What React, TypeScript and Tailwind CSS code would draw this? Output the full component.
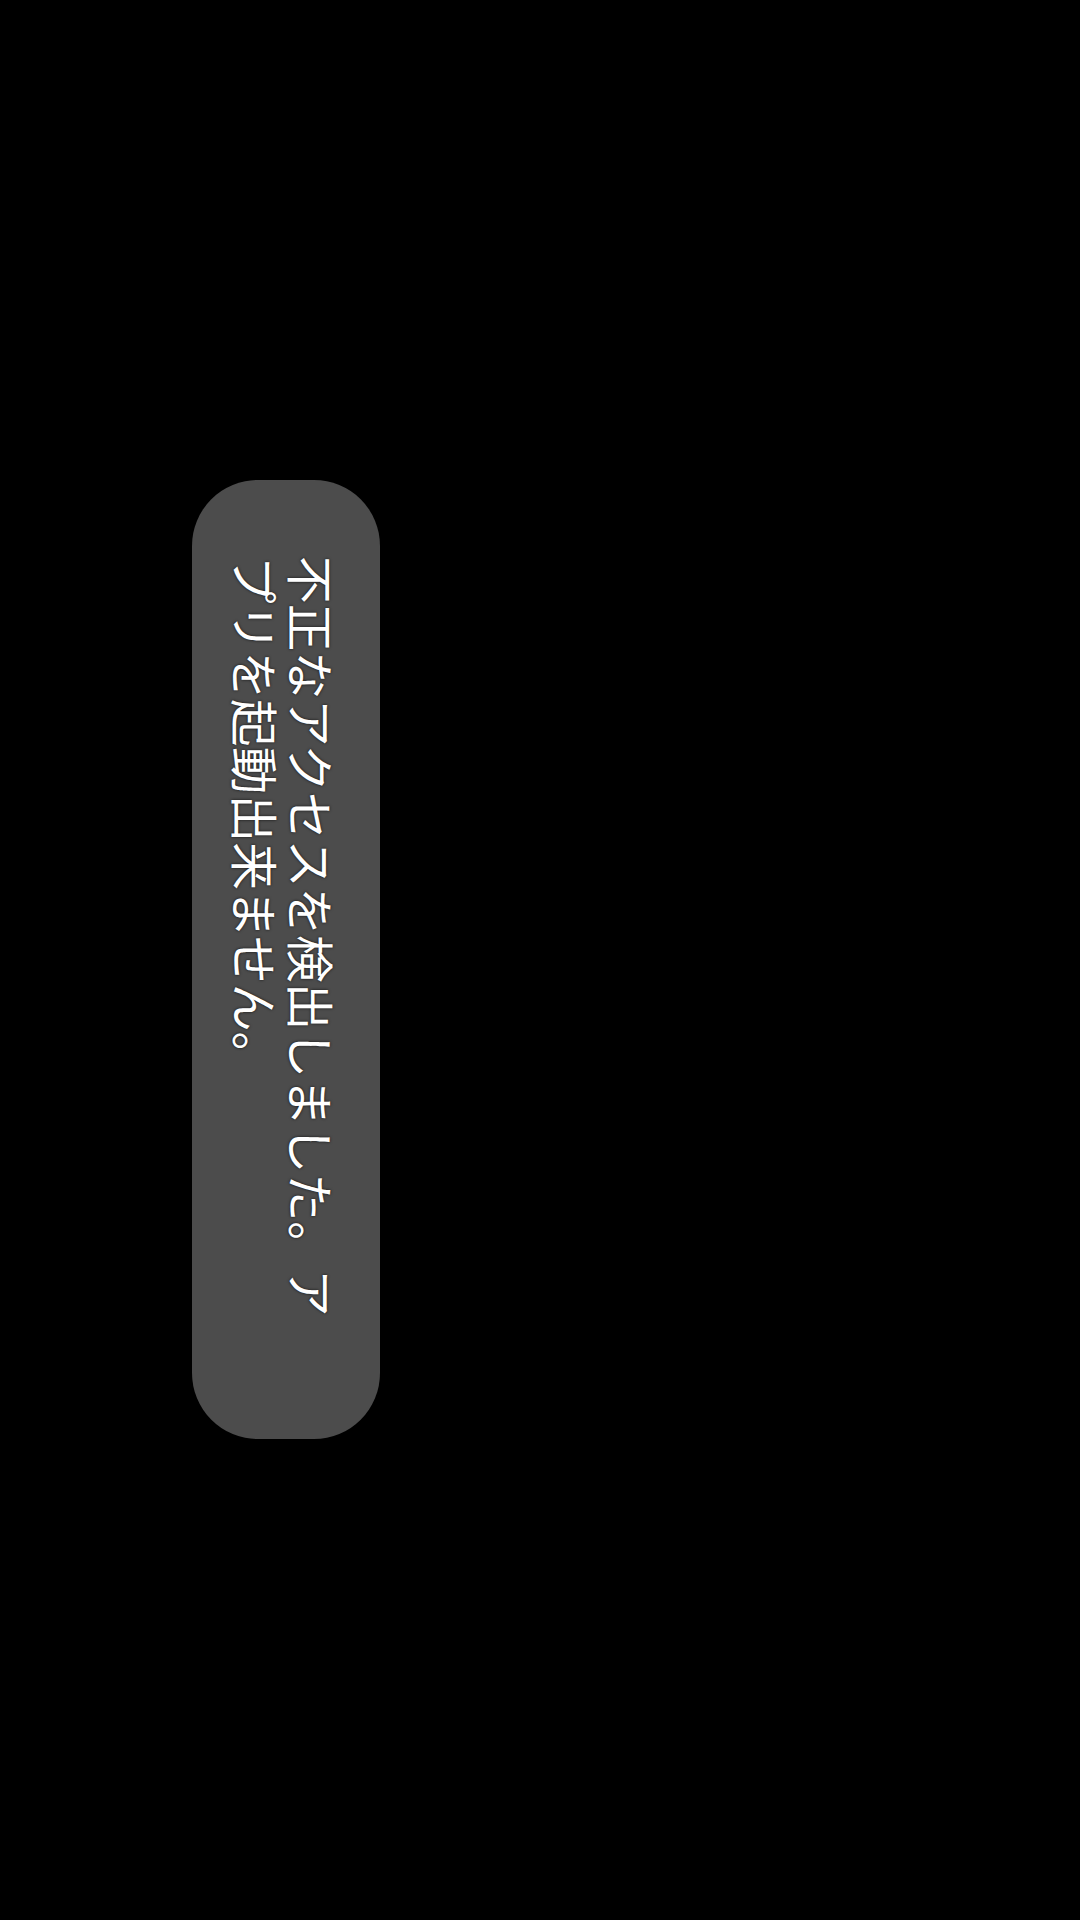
export default function App() {
  return (
    <div className="w-[1080px] h-[1920px] bg-black pl-[192px] pt-[480px]">
      <div
        className="w-[188px] h-[959px] rounded-[66px] bg-[#4c4c4c] pt-[76px] pb-[93px] pr-[40px] pl-[34px] text-white text-[47.7px] leading-[56px] [writing-mode:vertical-rl] [text-orientation:sideways] [text-shadow:0_0_3px_rgba(0,0,0,0.8)]"
        style={{ fontFamily: '"Noto Sans CJK JP", "Noto Sans", sans-serif' }}
      >
        不正なアクセスを検出しました。アプリを起動出来ません。
      </div>
    </div>
  );
}
